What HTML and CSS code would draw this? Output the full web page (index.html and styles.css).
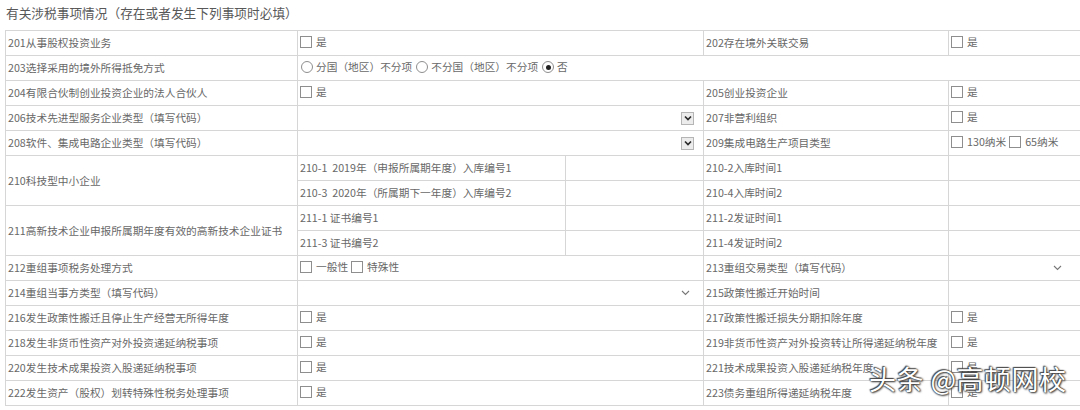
FILE: index.html
```html
<!DOCTYPE html>
<html lang="zh-CN">
<head>
<meta charset="utf-8">
<title>有关涉税事项情况</title>
<link rel="stylesheet" href="styles.css">
</head>
<body>
<div class="page">
  <div class="title">有关涉税事项情况（存在或者发生下列事项时必填）</div>
  <table class="grid">
    <colgroup>
      <col class="c1"><col class="c2a"><col class="c2b"><col class="c3"><col class="c4">
    </colgroup>
    <tr>
      <td>201从事股权投资业务</td>
      <td colspan="2"><span class="opt"><span class="cb"></span>是</span></td>
      <td>202存在境外关联交易</td>
      <td><span class="opt"><span class="cb"></span>是</span></td>
    </tr>
    <tr>
      <td>203选择采用的境外所得抵免方式</td>
      <td colspan="4"><span class="opt"><span class="rd"></span>分国（地区）不分项</span><span class="opt"><span class="rd"></span>不分国（地区）不分项</span><span class="opt tight"><span class="rd on"></span>否</span></td>
    </tr>
    <tr>
      <td>204有限合伙制创业投资企业的法人合伙人</td>
      <td colspan="2"><span class="opt"><span class="cb"></span>是</span></td>
      <td>205创业投资企业</td>
      <td><span class="opt"><span class="cb"></span>是</span></td>
    </tr>
    <tr>
      <td>206技术先进型服务企业类型（填写代码）</td>
      <td colspan="2"><div class="sel"><span class="selbtn"><svg width="10" height="10" viewBox="0 0 10 10"><polyline points="2,3.5 5,6.5 8,3.5" fill="none" stroke="#2a2a2a" stroke-width="1.7"/></svg></span></div></td>
      <td>207非营利组织</td>
      <td><span class="opt"><span class="cb"></span>是</span></td>
    </tr>
    <tr>
      <td>208软件、集成电路企业类型（填写代码）</td>
      <td colspan="2"><div class="sel"><span class="selbtn"><svg width="10" height="10" viewBox="0 0 10 10"><polyline points="2,3.5 5,6.5 8,3.5" fill="none" stroke="#2a2a2a" stroke-width="1.7"/></svg></span></div></td>
      <td>209集成电路生产项目类型</td>
      <td><span class="opt"><span class="cb"></span>130纳米</span><span class="opt"><span class="cb"></span>65纳米</span></td>
    </tr>
    <tr>
      <td rowspan="2">210科技型中小企业</td>
      <td>210-1&nbsp;&nbsp;2019年（申报所属期年度）入库编号1</td>
      <td></td>
      <td>210-2入库时间1</td>
      <td></td>
    </tr>
    <tr>
      <td>210-3&nbsp;&nbsp;2020年（所属期下一年度）入库编号2</td>
      <td></td>
      <td>210-4入库时间2</td>
      <td></td>
    </tr>
    <tr>
      <td rowspan="2">211高新技术企业申报所属期年度有效的高新技术企业证书</td>
      <td>211-1 证书编号1</td>
      <td></td>
      <td>211-2发证时间1</td>
      <td></td>
    </tr>
    <tr>
      <td>211-3 证书编号2</td>
      <td></td>
      <td>211-4发证时间2</td>
      <td></td>
    </tr>
    <tr>
      <td>212重组事项税务处理方式</td>
      <td colspan="2"><span class="opt"><span class="cb"></span>一般性</span><span class="opt"><span class="cb"></span>特殊性</span></td>
      <td>213重组交易类型（填写代码）</td>
      <td><div class="sel plain p213"><svg width="9" height="6" viewBox="0 0 9 6"><polyline points="1,1 4.5,4.5 8,1" fill="none" stroke="#777" stroke-width="1.1"/></svg></div></td>
    </tr>
    <tr>
      <td>214重组当事方类型（填写代码）</td>
      <td colspan="2"><div class="sel plain p214"><svg width="9" height="6" viewBox="0 0 9 6"><polyline points="1,1 4.5,4.5 8,1" fill="none" stroke="#777" stroke-width="1.1"/></svg></div></td>
      <td>215政策性搬迁开始时间</td>
      <td></td>
    </tr>
    <tr>
      <td>216发生政策性搬迁且停止生产经营无所得年度</td>
      <td colspan="2"><span class="opt"><span class="cb"></span>是</span></td>
      <td>217政策性搬迁损失分期扣除年度</td>
      <td><span class="opt"><span class="cb"></span>是</span></td>
    </tr>
    <tr>
      <td>218发生非货币性资产对外投资递延纳税事项</td>
      <td colspan="2"><span class="opt"><span class="cb"></span>是</span></td>
      <td>219非货币性资产对外投资转让所得递延纳税年度</td>
      <td><span class="opt"><span class="cb"></span>是</span></td>
    </tr>
    <tr>
      <td>220发生技术成果投资入股递延纳税事项</td>
      <td colspan="2"><span class="opt"><span class="cb"></span>是</span></td>
      <td>221技术成果投资入股递延纳税年度</td>
      <td><span class="opt"><span class="cb"></span>是</span></td>
    </tr>
    <tr>
      <td>222发生资产（股权）划转特殊性税务处理事项</td>
      <td colspan="2"><span class="opt"><span class="cb"></span>是</span></td>
      <td>223债务重组所得递延纳税年度</td>
      <td><span class="opt"><span class="cb"></span>是</span></td>
    </tr>
  </table>
  <div class="watermark">头条 @高顿网校</div>
</div>
</body>
</html>
```

FILE: styles.css
```css
html, body {
  margin: 0;
  padding: 0;
  background: #fff;
}
.page {
  position: relative;
  width: 1080px;
  height: 410px;
  overflow: hidden;
  font-family: "Noto Sans CJK SC", "Noto Sans", sans-serif;
  color: #686868;
}
.title {
  height: 30px;
  box-sizing: border-box;
  padding: 4px 0 0 6px;
  font-size: 12.7px;
  line-height: 18px;
  color: #585858;
}
.grid {
  margin-left: 5px;
  width: 1095px;
  table-layout: fixed;
  border-collapse: collapse;
  font-size: 10.7px;
}
.c1 { width: 292px; }
.c2a { width: 268px; }
.c2b { width: 138px; }
.c3 { width: 245px; }
.c4 { width: 152px; }
.grid td {
  border: 1px solid #d6d6d6;
  height: 24px;
  padding: 0 0 0 2px;
  line-height: 16px;
  white-space: nowrap;
  overflow: hidden;
  vertical-align: middle;
}
.opt {
  display: inline-flex;
  align-items: center;
  margin-right: 3px;
}
.opt.tight { margin-right: 0; }
.cb {
  display: inline-block;
  width: 10px;
  height: 10px;
  border: 1px solid #8e8e8e;
  margin-right: 4px;
  background: #fff;
}
.rd {
  display: inline-block;
  position: relative;
  width: 10px;
  height: 10px;
  border: 1px solid #8e8e8e;
  border-radius: 50%;
  margin-right: 3px;
  margin-left: 1px;
}
.rd.on::after {
  content: "";
  position: absolute;
  left: 2.5px;
  top: 2.5px;
  width: 5px;
  height: 5px;
  border-radius: 50%;
  background: #222;
}
.sel {
  display: flex;
  justify-content: flex-end;
  align-items: center;
}
.selbtn {
  display: flex;
  align-items: center;
  justify-content: center;
  width: 11px;
  height: 11px;
  border: 1px solid #b5b5b5;
  background: #ececec;
  margin-right: 9px;
}
.p213 { padding-right: 38px; }
.p214 { padding-right: 13px; }
.watermark {
  position: absolute;
  left: 869px;
  top: 362px;
  font-family: "Noto Sans CJK SC", sans-serif;
  font-size: 27px;
  line-height: 34px;
  color: #fff;
  letter-spacing: 0.5px;
  text-shadow: 0 0 1px #333, 0 0 2px #333, 1px 1px 2px #444, -1px -1px 1px #555;
}
```
